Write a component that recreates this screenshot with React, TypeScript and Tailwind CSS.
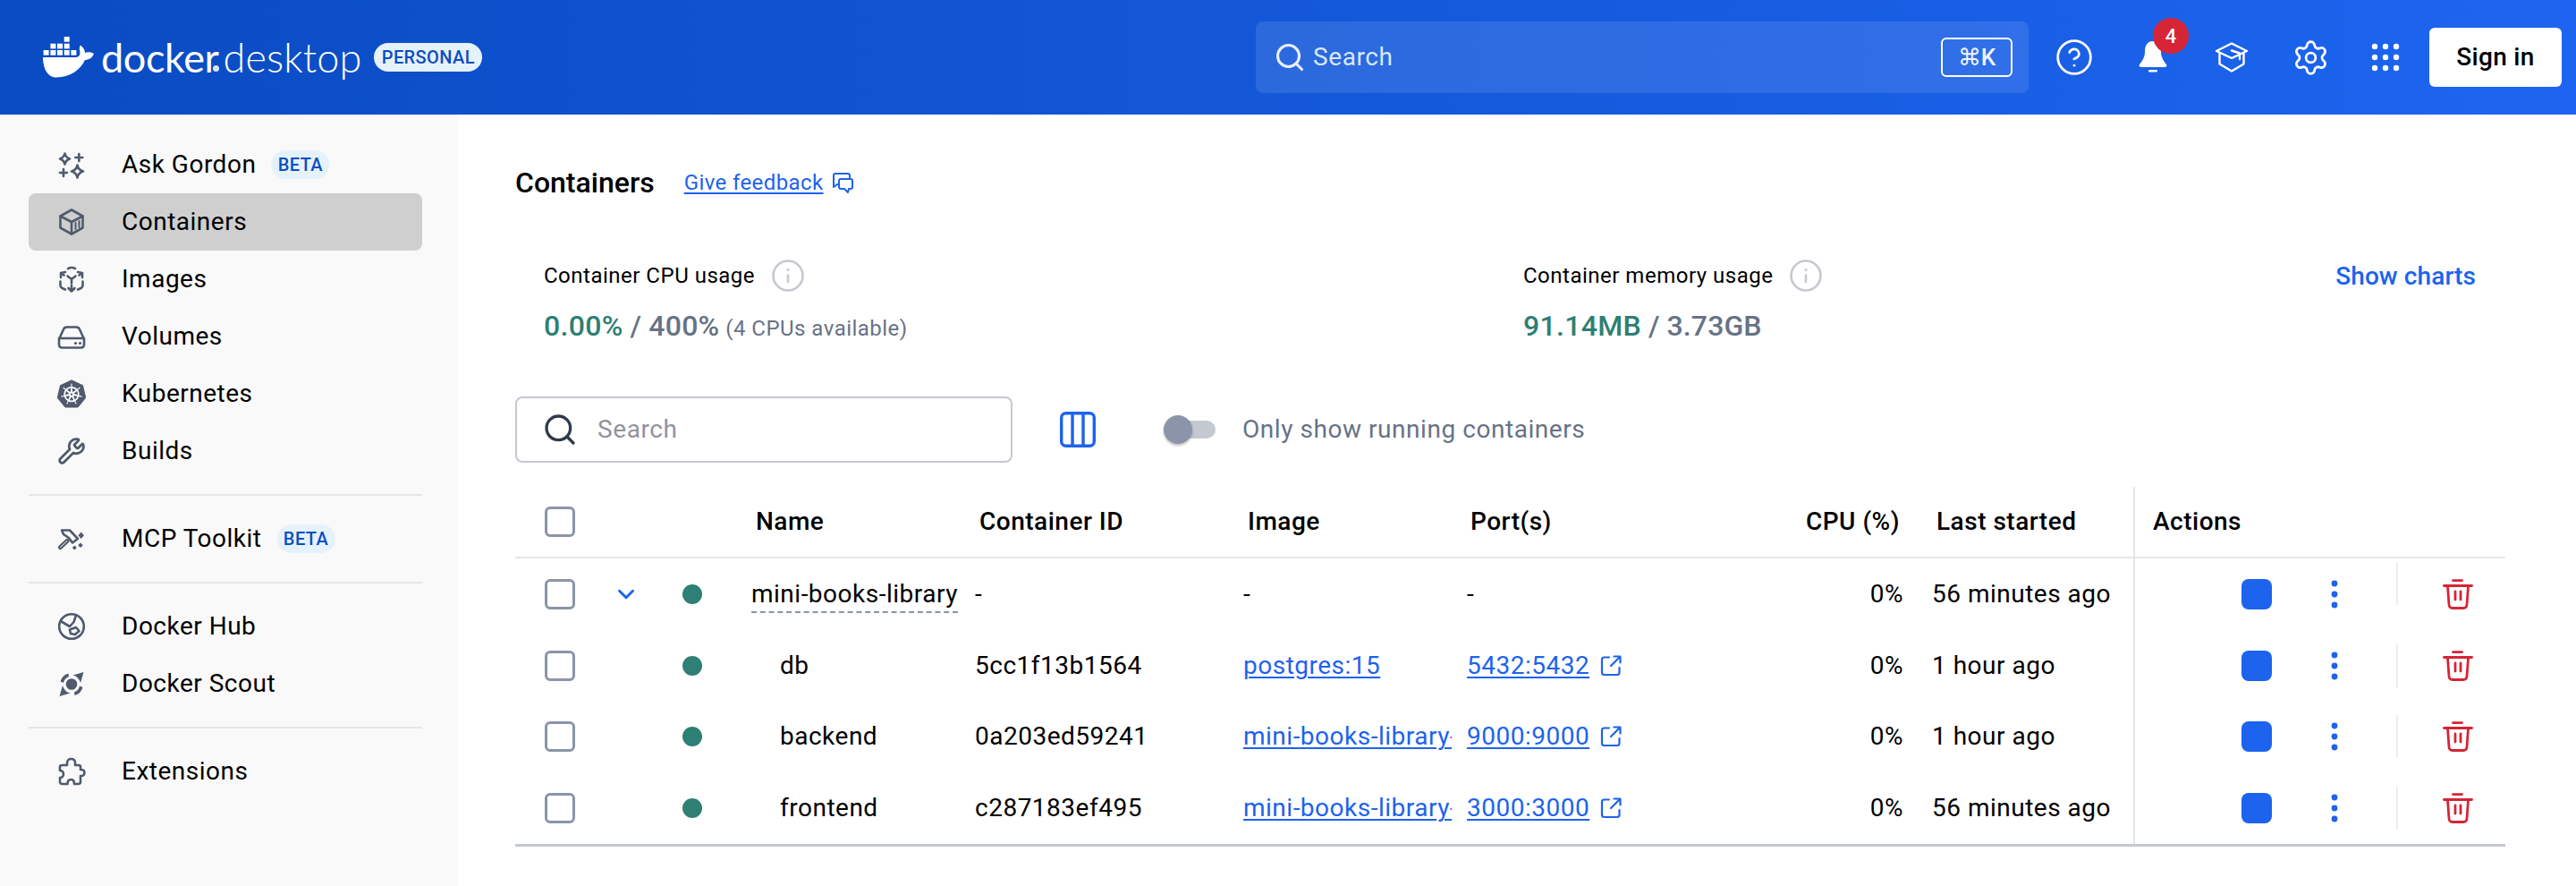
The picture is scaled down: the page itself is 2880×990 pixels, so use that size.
import React from "react";
import { Search, CircleHelp, Settings, Wrench, ChevronDown } from "lucide-react";
import { SiKubernetes } from "react-icons/si";

const gray = "#505a6c";

function Ico({ children }: { children: React.ReactNode }) {
  return (
    <svg width="32" height="32" viewBox="0 0 32 32" fill="none" stroke={gray} strokeWidth="2.6" strokeLinecap="round" strokeLinejoin="round" className="shrink-0">
      {children}
    </svg>
  );
}

const GordonIcon = () => (
  <Ico>
    <path d="M8.5 3.5 Q9.5 8 14 9.5 Q9.5 11 8.5 15.5 Q7.5 11 3 9.5 Q7.5 8 8.5 3.5Z" />
    <path d="M22.5 16.5 Q23.5 22 29 23.5 Q23.5 25 22.5 30.5 Q21.5 25 16 23.5 Q21.5 22 22.5 16.5Z" />
    <path d="M24.3 4 V12 M20.3 8 H28.3" />
    <path d="M7 21 V29 M3 25 H11" />
  </Ico>
);
const ContainerIcon = () => (
  <Ico>
    <path d="M16 2.5 L28.5 9.5 V22.5 L16 29.5 L3.5 22.5 V9.5Z" />
    <path d="M3.5 9.5 L16 16 L28.5 9.5 M16 16 V29.5" />
    <path d="M20.5 17 V24 M24.5 15 V22" strokeWidth="2" />
  </Ico>
);
const ImagesIcon = () => (
  <Ico>
    <path d="M12 4.2 Q16 1.8 20 4.2" />
    <path d="M4 14 V9 L9 8 M5 9 L7.5 11.5" />
    <path d="M28 14 V9 L23 8 M27 9 L24.5 11.5" />
    <path d="M3.5 18.5 V23 Q3.5 25 5.5 26 L9 27.5" />
    <path d="M28.5 18.5 V23 Q28.5 25 26.5 26 L23 27.5" />
    <path d="M16 23 V29.5 M12.5 26 L16 29.5 L19.5 26" />
    <path d="M11.5 12.5 L16 16 L20.5 12.5 M16 16 V20.5" />
  </Ico>
);
const VolumesIcon = () => (
  <Ico>
    <path d="M2 19 L7 8 Q8 5.5 11 5.5 H21 Q24 5.5 25 8 L30 19 V25 Q30 28.5 26.5 28.5 H5.5 Q2 28.5 2 25Z" />
    <path d="M2 18 H30" />
    <circle cx="20.5" cy="23.5" r="1.6" fill={gray} stroke="none" />
    <circle cx="25.5" cy="23.5" r="1.6" fill={gray} stroke="none" />
  </Ico>
);
const McpIcon = () => (
  <Ico>
    <path d="M5 6.5 H14 L23 16 L17 20.5 L13 15 L7 11 Z" />
    <path d="M3.5 25.5 L11 18.5" strokeWidth="5" />
    <path d="M3.5 25.5 L11 18.5" stroke="#f9f9fa" strokeWidth="1" />
    <path d="M26.7 8.5 L30 12.3 L26.7 16 L23.4 12.3Z" fill={gray} stroke="none" />
    <path d="M26 20.5 L28.8 23.3 L26 26 L23.2 23.3Z" fill={gray} stroke="none" />
    <path d="M19.3 23.5 L21.8 26 L19.3 28.5 L16.8 26Z" fill={gray} stroke="none" />
  </Ico>
);
const HubIcon = () => (
  <Ico>
    <circle cx="16" cy="16" r="13.8" />
    <path d="M4.5 10.5 L14 16 L18.5 11 L21 3.5" />
    <path d="M14 19.5 L21 17 L24.5 21 L20 25 L15 24Z" />
  </Ico>
);
const ScoutIcon = () => (
  <Ico>
    <circle cx="16" cy="16.5" r="6.3" fill={gray} stroke="none" />
    <path d="M29.5 3 L17.5 6.5 Q24 8 26 15 Z" fill={gray} stroke="none" />
    <path d="M2.5 30 L14.5 26.5 Q8 25 6 18 Z" fill={gray} stroke="none" />
    <path d="M12.5 4.5 Q5.5 6.5 3.5 13.5 L7 15 Q8 10 13 8 Z" fill={gray} stroke="none" />
    <path d="M19.5 29 Q26.5 27 28.5 20 L25 18.5 Q24 23.5 19 25.5 Z" fill={gray} stroke="none" />
  </Ico>
);
const ExtensionsIcon = () => (
  <Ico>
    <path d="M5.5 9 H11 V6.5 C11 3.5 13 2 15.5 2 C18 2 20 3.5 20 6.5 V9 H24 C25.2 9 26 9.8 26 11 V14 H27 C29 14 30.5 15.5 30.5 17.5 C30.5 19.5 29 21 27 21 H26 V27.5 C26 29 25 30 23.5 30 H19 C19 27 18 25 15.5 25 C13 25 11.5 27 11.5 30 H5.5 C4 30 3 29 3 27.5 V23 C5 23 7 21.5 7 19 C7 16.5 5 15 3 15 V11 C3 9.8 4 9 5.5 9Z" />
  </Ico>
);

function Beta() {
  return (
    <span className="ml-[17px] flex h-8 w-[65px] items-center justify-center rounded-full bg-[#e5f2fc] text-[20px] font-medium tracking-[0.4px] text-[#0a4dc3]">
      BETA
    </span>
  );
}

function NavItem({ icon, label, active, beta }: { icon: React.ReactNode; label: string; active?: boolean; beta?: boolean }) {
  return (
    <div className={`flex h-16 items-center rounded-lg pl-8 ${active ? "bg-[#cfcfcf]" : ""}`}>
      {icon}
      <span className="ml-10 text-[28px] tracking-[0.5px] text-black">{label}</span>
      {beta && <Beta />}
    </div>
  );
}

const Divider = () => <div className="my-4 h-0.5 bg-[#e4e5e8]" />;

function Sidebar() {
  return (
    <aside className="w-[512px] shrink-0 bg-[#f9f9fa] pt-6 pl-8 pr-10 pb-[96px]">
      <NavItem icon={<GordonIcon />} label="Ask Gordon" beta />
      <NavItem icon={<ContainerIcon />} label="Containers" active />
      <NavItem icon={<ImagesIcon />} label="Images" />
      <NavItem icon={<VolumesIcon />} label="Volumes" />
      <NavItem icon={<SiKubernetes size={32} color={gray} className="shrink-0" />} label="Kubernetes" />
      <NavItem icon={<Wrench size={32} color={gray} strokeWidth={2.1} className="shrink-0" />} label="Builds" />
      <Divider />
      <NavItem icon={<McpIcon />} label="MCP Toolkit" beta />
      <Divider />
      <NavItem icon={<HubIcon />} label="Docker Hub" />
      <NavItem icon={<ScoutIcon />} label="Docker Scout" />
      <Divider />
      <NavItem icon={<ExtensionsIcon />} label="Extensions" />
    </aside>
  );
}

function Whale() {
  return (
    <svg width="57" height="46" viewBox="0 0 57 46" fill="white" className="shrink-0">
      <rect x="23.7" y="0" width="6" height="5.7" />
      <rect x="8.4" y="7.7" width="6" height="5.7" />
      <rect x="16" y="7.7" width="6" height="5.7" />
      <rect x="23.7" y="7.7" width="6" height="5.7" />
      <rect x="0.6" y="15" width="6" height="5.7" />
      <rect x="8.4" y="15" width="6" height="5.7" />
      <rect x="16" y="15" width="6" height="5.7" />
      <rect x="23.7" y="15" width="6" height="5.7" />
      <rect x="31.4" y="15" width="6" height="5.7" />
      <path d="M0 23 H37 C40 23 42.5 20 41 15 C40.5 13 41 11 42 9.5 C45 12 47 15 47 18 C50 17 54 17 57 19 C55 24 51 26 47 26 C42 37 30 45.5 15 45.5 C5 45.5 0 35 0 23Z" />
    </svg>
  );
}

function BellIcon() {
  return (
    <svg width="32" height="36" viewBox="0 0 32 36" fill="white" className="shrink-0">
      <path d="M16 0 C9 0 7 6 7 12 C7 18 4 22 1 26 C0 28 1 29 3 29 H29 C31 29 32 28 31 26 C28 22 25 18 25 12 C25 6 23 0 16 0Z" />
      <rect x="11" y="32" width="10" height="2.6" rx="1.3" />
    </svg>
  );
}
function SchoolIcon() {
  return (
    <svg width="36" height="36" viewBox="0 0 36 36" fill="none" stroke="white" strokeWidth="2.4" strokeLinecap="round" strokeLinejoin="round" className="shrink-0">
      <path d="M1 11 L18 2.5 L35 11 L18 19 Z" />
      <path d="M4.5 13.5 V25.5 L18 33.5 L31.5 25.5 V13.5" />
      <path d="M18 10.5 L27 13.5 V20" />
    </svg>
  );
}
function GridIcon() {
  const pts = [-12, 0, 12];
  return (
    <svg width="36" height="36" viewBox="-18 -18 36 36" fill="white" className="shrink-0">
      {pts.map((y) => pts.map((x) => <circle key={`${x}:${y}`} cx={x} cy={y} r="3.2" />))}
    </svg>
  );
}

function HeaderBtn({ children }: { children: React.ReactNode }) {
  return <div className="relative flex h-20 w-[88px] items-center justify-center">{children}</div>;
}

function Header() {
  return (
    <header className="flex h-32 items-center bg-linear-to-r from-[#0a4bc2] to-[#1d65f0] pl-12 pr-4">
      <Whale />
      <span className="relative ml-2 font-['Lato'] text-[45px] leading-none tracking-[-0.4px] text-white">
        docker
        <span className="absolute bottom-[7px] right-0 h-[7px] w-[7px] rounded-full bg-white/85" />
      </span>
      <span className="ml-[5px] font-['Lato'] text-[45px] font-light leading-none tracking-[0.1px] text-white">desktop</span>
      <span className="ml-[14px] flex h-8 w-[121px] items-center justify-center rounded-full bg-[#e5f2fc] text-[20px] font-medium tracking-[0.4px] text-[#0a4dc3]">
        PERSONAL
      </span>
      <div className="ml-auto flex h-20 w-[864px] items-center rounded-lg bg-white/10 pl-5 pr-[18px]">
        <Search size={36} color="#e8effc" strokeWidth={2.1} />
        <span className="ml-2 text-[28px] tracking-[0.6px] text-[#dbe6fb]">Search</span>
        <span className="ml-auto flex h-11 w-20 items-center justify-center rounded-md border-2 border-white text-[26px] font-medium text-[#eef3fd]">⌘K</span>
      </div>
      <div className="ml-[7px] flex items-center">
        <HeaderBtn><CircleHelp size={44} color="white" strokeWidth={1.5} /></HeaderBtn>
        <HeaderBtn>
          <BellIcon />
          <span className="absolute left-[44px] top-[-4px] flex h-10 w-10 items-center justify-center rounded-full bg-[#d52536] text-[22px] font-medium text-white">4</span>
        </HeaderBtn>
        <HeaderBtn><SchoolIcon /></HeaderBtn>
        <HeaderBtn><Settings size={43} color="white" strokeWidth={1.55} /></HeaderBtn>
        <div className="flex h-20 w-20 items-center justify-center"><GridIcon /></div>
      </div>
      <button className="ml-[9px] flex h-[66px] w-[148px] items-center justify-center rounded-md bg-white text-[28px] font-medium tracking-[0.3px] text-black">
        Sign in
      </button>
    </header>
  );
}

function InfoIcon() {
  return (
    <svg width="36" height="36" viewBox="0 0 36 36" fill="none" stroke="#c4c8d1" strokeWidth="2.6" className="ml-[19px] shrink-0">
      <circle cx="18" cy="18" r="16.5" />
      <path d="M18 16.5 V26" strokeWidth="2.6" />
      <circle cx="18" cy="11.5" r="1.5" fill="#c4c8d1" stroke="none" />
    </svg>
  );
}

function Checkbox() {
  return <span className="block h-[34px] w-[34px] rounded-md border-[3px] border-[#8b94a8] bg-white" />;
}

function ExternalIcon() {
  return (
    <svg width="26" height="26" viewBox="0 0 26 26" fill="none" stroke="#1d63ed" strokeWidth="2.2" strokeLinecap="round" strokeLinejoin="round" className="ml-[11px] shrink-0">
      <path d="M11 3.5 H5.5 Q3 3.5 3 6 V20.5 Q3 23 5.5 23 H20 Q22.5 23 22.5 20.5 V15" />
      <path d="M13 13 L23 3 M16.5 2.5 H23.5 V9.5" />
    </svg>
  );
}

function DotsIcon() {
  return (
    <svg width="8" height="32" viewBox="0 0 8 32" fill="#1d63ed" className="shrink-0">
      <circle cx="4" cy="4" r="3.4" />
      <circle cx="4" cy="16" r="3.4" />
      <circle cx="4" cy="28" r="3.4" />
    </svg>
  );
}

function TrashIcon() {
  return (
    <svg width="34" height="34" viewBox="0 0 34 34" fill="none" stroke="#d52536" strokeWidth="2.8" strokeLinecap="round" strokeLinejoin="round" className="shrink-0">
      <path d="M11.5 1.6 H21.5" />
      <path d="M1.5 7.5 H32.5" />
      <path d="M5.5 8 L7 28.5 Q7.3 32.5 11 32.5 H23 Q26.7 32.5 27 28.5 L28.5 8" />
      <path d="M14 14 V23 M20 14 V23" />
    </svg>
  );
}

const rowGrid = "grid grid-cols-[100px_48px_100px_250px_300px_250px_316px_204px_241px_416px] items-center";

function Actions({ first }: { first?: boolean }) {
  return (
    <div className="flex h-full items-center border-l-2 border-[#e4e5e8] pl-[119px]">
      <span className="h-[34px] w-[34px] rounded-lg bg-[#1d63ed]" />
      <span className="ml-[66px] flex w-[8px]"><DotsIcon /></span>
      <span className={`ml-[65px] h-12 w-0.5 bg-[#eceded] ${first ? "-translate-y-3" : ""}`} />
      <span className="ml-[50px]"><TrashIcon /></span>
    </div>
  );
}

const linkCls = "text-[#1d63ed] underline decoration-2 underline-offset-[3px]";

function Row({ name, id, image, port, last, group }: { name: string; id: string; image?: string; port?: string; last: string; group?: boolean }) {
  return (
    <div className={`${rowGrid} h-[79.8px]`}>
      <div className="flex justify-center"><Checkbox /></div>
      <div className="flex justify-center">{group && <ChevronDown size={30} color="#1d63ed" strokeWidth={2.4} />}</div>
      <div className="flex justify-center"><span className="h-[22px] w-[22px] rounded-full bg-[#2e7f74]" /></div>
      {group ? (
        <div className="pl-4">
          <span className="border-b-2 border-dashed border-[#8b94a8] pb-[3px]">{name}</span>
        </div>
      ) : (
        <div className="pl-12">{name}</div>
      )}
      <div className="pl-4">{id}</div>
      <div className="pl-4">
        <div className="w-[233px] overflow-hidden whitespace-nowrap">
          {image ? <span className={linkCls}>{image}</span> : "-"}
        </div>
      </div>
      <div className="flex items-center pl-4">
        {port ? (
          <>
            <span className={linkCls}>{port}</span>
            <ExternalIcon />
          </>
        ) : (
          "-"
        )}
      </div>
      <div className="pr-4 text-right">0%</div>
      <div className="pl-4 whitespace-nowrap">{last}</div>
      <Actions first={group} />
    </div>
  );
}

function Table() {
  return (
    <div className="mt-[27px] border-b-[3px] border-[#c4c8d1] text-[28px] tracking-[0.5px] text-black">
      <div className={`${rowGrid} h-[80px] border-b-2 border-[#e4e5e8] font-medium`}>
        <div className="flex justify-center"><Checkbox /></div>
        <div />
        <div />
        <div className="pl-[21px]">Name</div>
        <div className="pl-[21px]">Container ID</div>
        <div className="pl-[21px]">Image</div>
        <div className="pl-5">Port(s)</div>
        <div className="pr-5 text-right">CPU (%)</div>
        <div className="pl-[21px]">Last started</div>
        <div className="flex h-full items-center border-l-2 border-[#e4e5e8] pl-[20px]">Actions</div>
      </div>
      <Row group name="mini-books-library" id="-" last="56 minutes ago" />
      <Row name="db" id="5cc1f13b1564" image="postgres:15" port="5432:5432" last="1 hour ago" />
      <Row name="backend" id="0a203ed59241" image="mini-books-library-" port="9000:9000" last="1 hour ago" />
      <Row name="frontend" id="c287183ef495" image="mini-books-library-" port="3000:3000" last="56 minutes ago" />
    </div>
  );
}

function Main() {
  return (
    <main className="min-w-0 flex-1 pl-16 pr-[79px] pt-[52px]">
      <div className="flex h-12 items-center">
        <h1 className="text-[32px] font-medium text-black">Containers</h1>
        <span className="ml-[33px] text-[24px] tracking-[0.4px] text-[#1d63ed] underline decoration-2 underline-offset-[3px]">Give feedback</span>
        <svg width="24" height="26" viewBox="0 0 24 26" fill="none" stroke="#1d63ed" strokeWidth="2" strokeLinejoin="round" className="ml-[9px]">
          <path d="M14 3 H4 Q2 3 2 5 V18 L6 15 H8" />
          <path d="M14 3 H18 Q20 3 20 5 V8" />
          <path d="M10 9 H21 Q23 9 23 11 V18 Q23 20 21 20 H19 L18 24 L14 20 H10 Q8 20 8 18 V11 Q8 9 10 9Z" />
        </svg>
      </div>
      <div className="mt-[60px] flex pl-8 pr-[33px]">
        <div className="w-[1095px]">
          <div className="flex h-10 items-center text-[24px] tracking-[0.5px] text-black">
            Container CPU usage
            <InfoIcon />
          </div>
          <div className="mt-3 flex h-10 items-baseline text-[#677285]">
            <span className="text-[32px] font-medium tracking-[0.3px] text-[#2e7f74]">0.00%</span>
            <span className="ml-2 text-[32px] font-medium tracking-[0.2px]">/ 400%</span>
            <span className="ml-[7px] text-[24px] tracking-[0.47px]">(4 CPUs available)</span>
          </div>
        </div>
        <div>
          <div className="flex h-10 items-center text-[24px] tracking-[0.5px] text-black">
            Container memory usage
            <InfoIcon />
          </div>
          <div className="mt-3 flex h-10 items-baseline text-[#677285]">
            <span className="text-[32px] font-medium tracking-[0.3px] text-[#2e7f74]">91.14MB</span>
            <span className="ml-2 text-[32px] font-medium tracking-[0.1px]">/ 3.73GB</span>
          </div>
        </div>
        <div className="ml-auto flex h-10 items-center pt-0.5 text-[28px] font-medium tracking-[0.1px] text-[#1d63ed]">Show charts</div>
      </div>
      <div className="mt-[63px] flex h-[74px] items-center">
        <div className="flex h-full w-[556px] items-center rounded-lg border-2 border-[#c4c8d1] pl-[28px]">
          <Search size={40} color="#2f3a4c" strokeWidth={2} />
          <span className="ml-[22px] text-[28px] tracking-[0.6px] text-[#8f949e]">Search</span>
        </div>
        <svg width="40" height="40" viewBox="0 0 40 40" fill="none" stroke="#1d63ed" strokeWidth="3.4" className="ml-[53px]">
          <rect x="1.7" y="1.7" width="36.6" height="36.6" rx="5" />
          <path d="M14 2 V38 M26 2 V38" />
        </svg>
        <div className="relative ml-[76px] h-5 w-[58px] rounded-full bg-[#c4c8d1]">
          <span className="absolute left-0 top-[-6px] h-8 w-8 rounded-full bg-[#8b94a8] shadow-[0_2px_3px_rgba(0,0,0,0.25)]" />
        </div>
        <span className="ml-[30px] text-[28px] tracking-[0.55px] text-[#677285]">Only show running containers</span>
      </div>
      <Table />
    </main>
  );
}

export default function App() {
  return (
    <div className="h-[990px] overflow-hidden bg-white font-['Roboto',sans-serif]">
      <Header />
      <div className="flex h-[862px]">
        <Sidebar />
        <Main />
      </div>
    </div>
  );
}
